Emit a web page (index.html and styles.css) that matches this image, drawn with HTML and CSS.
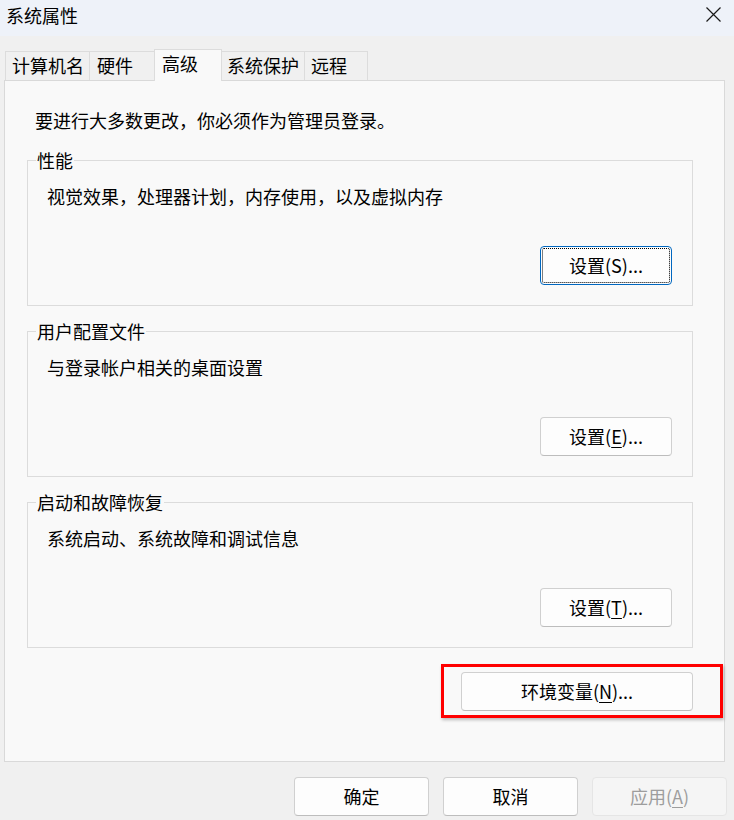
FILE: index.html
```html
<!DOCTYPE html>
<html lang="zh-CN">
<head>
<meta charset="utf-8">
<title>系统属性</title>
<link rel="stylesheet" href="styles.css">
</head>
<body>
<div class="window">
  <div class="titlebar">
    <span class="title">系统属性</span>
    <svg class="close" width="15" height="15" viewBox="0 0 15 15"><path d="M0.5 0.5L14.5 14.5M14.5 0.5L0.5 14.5" stroke="#1a1a1a" stroke-width="1.2" fill="none"/></svg>
  </div>
  <div class="tabs">
    <div class="tab t1">计算机名</div>
    <div class="tab t2">硬件</div>
    <div class="tab t3 active">高级</div>
    <div class="tab t4">系统保护</div>
    <div class="tab t5">远程</div>
  </div>
  <div class="panel">
    <div class="intro">要进行大多数更改，你必须作为管理员登录。</div>
    <fieldset class="group">
      <legend>性能</legend>
      <div class="desc">视觉效果，处理器计划，内存使用，以及虚拟内存</div>
      <div class="btnrow"><button class="btn set focus">设置(S)...</button></div>
    </fieldset>
    <fieldset class="group">
      <legend>用户配置文件</legend>
      <div class="desc">与登录帐户相关的桌面设置</div>
      <div class="btnrow"><button class="btn set">设置(<u>E</u>)...</button></div>
    </fieldset>
    <fieldset class="group">
      <legend>启动和故障恢复</legend>
      <div class="desc">系统启动、系统故障和调试信息</div>
      <div class="btnrow"><button class="btn set">设置(<u>T</u>)...</button></div>
    </fieldset>
    <div class="envrow">
      <div class="envwrap">
        <button class="btn env">环境变量(<u>N</u>)...</button>
        <div class="highlight"></div>
      </div>
    </div>
  </div>
  <div class="footer">
    <button class="btn foot">确定</button>
    <button class="btn foot">取消</button>
    <button class="btn foot disabled">应用(<u>A</u>)</button>
  </div>
</div>
</body>
</html>
```
FILE: styles.css
```css
* { box-sizing: border-box; }
html, body {
  margin: 0;
  padding: 0;
  background: #f0f0f0;
}
body {
  font-family: "Noto Sans CJK SC", "Noto Sans", sans-serif;
  font-size: 18px;
  color: #000;
  width: 734px;
  height: 820px;
  overflow: hidden;
}
.window {
  width: 734px;
  height: 820px;
  display: flex;
  flex-direction: column;
}
.titlebar {
  height: 36px;
  background: #eef2f9;
  display: flex;
  align-items: flex-start;
  padding-left: 6px;
}
.title {
  line-height: 30px;
  font-size: 18px;
}
.close {
  margin-left: auto;
  margin-right: 13px;
  margin-top: 7px;
}
.tabs {
  display: flex;
  align-items: flex-end;
  height: 32px;
  margin-top: 13px;
  margin-bottom: -1px;
  padding-left: 5px;
}
.tab {
  height: 29px;
  margin-bottom: 1px;
  border: 1px solid #dcdcdc;
  border-bottom: none;
  margin-right: -1px;
  background: #f0f0f0;
  line-height: 27px;
  padding-left: 6px;
  white-space: nowrap;
}
.t1 { width: 85px; }
.t2 { width: 67px; padding-left: 7px; }
.t3 { width: 68px; }
.t4 { width: 84px; padding-left: 5px; }
.t5 { width: 64px; padding-left: 6px; }
.tab.active {
  position: relative;
  z-index: 1;
  height: 32px;
  margin-bottom: 0;
  margin-left: -1px;
  margin-right: -1px;
  background: #f9f9f9;
  padding-left: 7px;
  line-height: 26px;
}
.panel {
  margin: 0 9px 0 4px;
  border: 1px solid #d9d9d9;
  background: #f9f9f9;
  padding: 27px 31px 50px 22px;
  flex: none;
}
.intro {
  line-height: 24px;
  margin-left: 8px;
}
.group {
  margin: 16px 0 0 0;
  padding: 12px 20px 20px 20px;
  border: 1px solid #dcdcdc;
  min-width: 0;
}
.group + .group { margin-top: 13px; }
.group legend {
  padding: 0 1px;
  margin-left: -12px;
  line-height: 24px;
}
.desc {
  line-height: 24px;
  margin-left: -1px;
}
.btnrow {
  display: flex;
  justify-content: flex-end;
  margin-top: 38px;
}
.btn {
  font-family: "Noto Sans CJK SC", "Noto Sans", sans-serif;
  font-size: 18px;
  color: #000;
  background: #fdfdfd;
  border: 1px solid #d0d0d0;
  border-bottom-color: #bdbdbd;
  border-radius: 4px;
  height: 39px;
  padding: 0;
  line-height: 37px;
  white-space: nowrap;
}
.btn u { text-decoration-thickness: 1px; text-underline-offset: 3px; }
.set { width: 132px; }
.focus {
  border: 1px solid #0067c0;
  outline: 1px dotted #000;
  outline-offset: -3px;
}
.envrow {
  display: flex;
  justify-content: flex-end;
  margin-top: 24px;
}
.envwrap {
  position: relative;
}
.env { width: 232px; display: block; }
.highlight {
  position: absolute;
  left: -20px;
  top: -8px;
  right: -30px;
  bottom: -7px;
  border: 3px solid #ff0000;
  box-shadow: 1px 2px 3px rgba(0,0,0,0.25);
  pointer-events: none;
}
.footer {
  display: flex;
  justify-content: flex-end;
  gap: 14px;
  padding-right: 7px;
  margin-top: 15px;
}
.foot { width: 135px; }
.disabled {
  background: #f5f5f5;
  border-color: #e5e5e5;
  color: #9d9d9d;
}
```
